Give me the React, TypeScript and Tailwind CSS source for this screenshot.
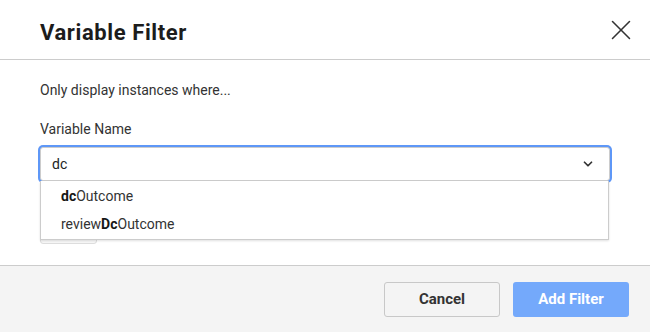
import { X, ChevronDown } from 'lucide-react'

type Option = { before: string; match: string; after: string }

const options: Option[] = [
  { before: '', match: 'dc', after: 'Outcome' },
  { before: 'review', match: 'Dc', after: 'Outcome' },
]

function OptionRow({ option }: { option: Option }) {
  return (
    <li className="flex h-[28px] items-center px-[20px] text-[14px] text-[#333]">
      {option.before}
      <span className="font-bold text-[#161616]">{option.match}</span>
      {option.after}
    </li>
  )
}

export default function App() {
  return (
    <div
      className="flex h-[332px] w-[650px] flex-col bg-white text-[#333]"
      style={{ fontFamily: 'Roboto, "Liberation Sans", sans-serif' }}
    >
      <header className="flex h-[60px] items-center justify-between border-b border-[#ccc] pl-10 pr-[12px]">
        <h1 className="pt-[6px] text-[22px] font-bold tracking-[0.6px] text-[#1c1c1c]">Variable Filter</h1>
        <button type="button" className="flex h-[34px] w-[34px] items-center justify-center text-[#333]">
          <X size={34} strokeWidth={1.1} />
        </button>
      </header>

      <div className="flex-1 px-10 pt-[20px]">
        <p className="text-[14px] leading-[20px] text-[#333]">Only display instances where...</p>
        <label className="mt-[19px] mb-2 block text-[14px] leading-[20px] text-[#333]">Variable Name</label>

        <div className="w-[570px]">
          <div className="relative">
            <div className="flex h-[34px] items-center justify-between rounded-[3px] border border-[#ccc] bg-white pl-[11px] pr-[14px] ring-2 ring-[#5e97f7]">
              <span className="text-[14px] text-[#222]">dc</span>
              <ChevronDown size={14} strokeWidth={3} className="text-[#333]" />
            </div>
            <ul className="absolute left-0 right-[1px] top-full z-10 border border-t-0 border-[#ccc] bg-white py-[1px] shadow-[0_1px_2px_rgba(0,0,0,0.12)]">
              {options.map((option) => (
                <OptionRow key={option.before + option.match} option={option} />
              ))}
            </ul>
          </div>
          <button
            type="button"
            className="mt-[22px] h-[41px] w-[57px] rounded-[3px] border border-[#ddd] bg-[#f7f7f7]"
          />
        </div>
      </div>

      <footer className="flex h-[67px] justify-end gap-[13px] border-t border-[#ccc] bg-[#f4f4f4] pr-[21px] pt-[16px]">
        <button
          type="button"
          className="h-[35px] w-[116px] rounded-[3px] border border-[#c8c8c8] bg-[#f4f4f4] text-[15px] font-bold text-[#333]"
        >
          Cancel
        </button>
        <button
          type="button"
          className="h-[35px] w-[116px] rounded-[3px] bg-[#74a9fb] text-[15px] font-bold text-white"
        >
          Add Filter
        </button>
      </footer>
    </div>
  )
}
